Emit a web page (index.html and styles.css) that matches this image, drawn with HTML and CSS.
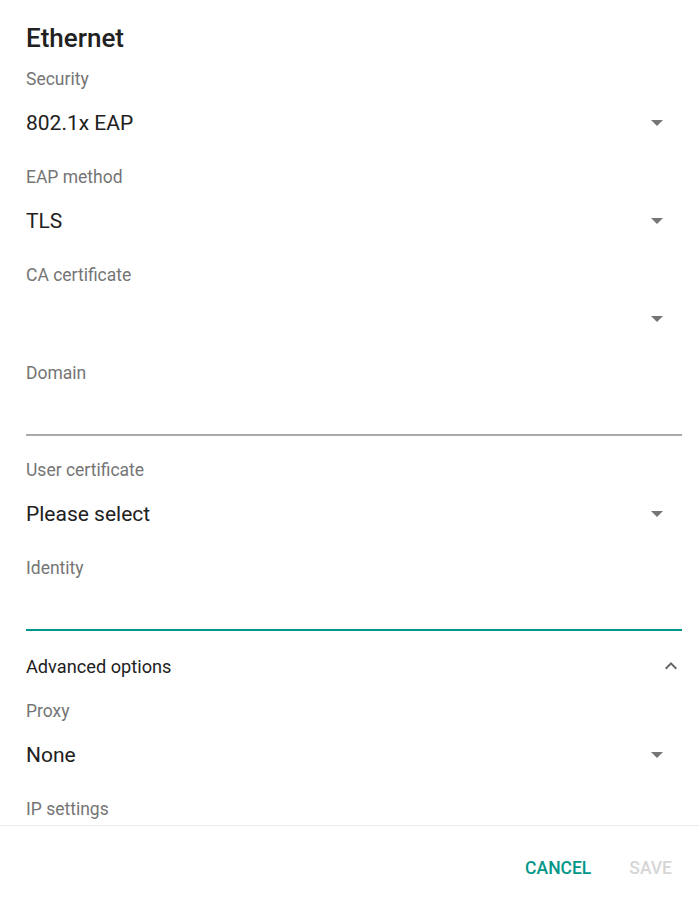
FILE: index.html
```html
<!DOCTYPE html>
<html>
<head>
<meta charset="utf-8">
<link rel="stylesheet" href="styles.css">
</head>
<body>
<div class="dialog">
  <div class="content">
    <h1 class="title">Ethernet</h1>

    <div class="field">
      <div class="label">Security</div>
      <div class="spinner"><span class="value">802.1x EAP</span><svg class="drop" width="12" height="6" viewBox="0 0 12 6"><polygon points="0,0 12,0 6,6"/></svg></div>
    </div>

    <div class="field">
      <div class="label">EAP method</div>
      <div class="spinner"><span class="value">TLS</span><svg class="drop" width="12" height="6" viewBox="0 0 12 6"><polygon points="0,0 12,0 6,6"/></svg></div>
    </div>

    <div class="field">
      <div class="label">CA certificate</div>
      <div class="spinner"><span class="value"></span><svg class="drop" width="12" height="6" viewBox="0 0 12 6"><polygon points="0,0 12,0 6,6"/></svg></div>
    </div>

    <div class="edit">
      <div class="label">Domain</div>
      <div class="input"></div>
    </div>

    <div class="field">
      <div class="label">User certificate</div>
      <div class="spinner"><span class="value">Please select</span><svg class="drop" width="12" height="6" viewBox="0 0 12 6"><polygon points="0,0 12,0 6,6"/></svg></div>
    </div>

    <div class="edit">
      <div class="label">Identity</div>
      <div class="input focused"></div>
    </div>

    <div class="advanced">
      <span class="adv-text">Advanced options</span>
      <svg class="chev" width="24" height="24" viewBox="0 0 24 24"><path d="M12 8l-6 6 1.41 1.41L12 10.83l4.59 4.58L18 14z"/></svg>
    </div>

    <div class="field">
      <div class="label">Proxy</div>
      <div class="spinner"><span class="value">None</span><svg class="drop" width="12" height="6" viewBox="0 0 12 6"><polygon points="0,0 12,0 6,6"/></svg></div>
    </div>

    <div class="field">
      <div class="label">IP settings</div>
    </div>
  </div>
  <div class="buttons">
    <button class="btn primary">CANCEL</button>
    <button class="btn disabled">SAVE</button>
  </div>
</div>
</body>
</html>
```

FILE: styles.css
```css
* { box-sizing: border-box; }
html, body {
  margin: 0;
  padding: 0;
  background: #ffffff;
}
body {
  font-family: Roboto, "Noto Sans", sans-serif;
  color: #212121;
  width: 699px;
  height: 899px;
  overflow: hidden;
}
.dialog {
  display: flex;
  flex-direction: column;
  height: 899px;
}
.content {
  height: 825px;
  overflow: hidden;
  padding: 22px 17px 0 26px;
}
.title {
  margin: 0 0 13px 0;
  font-size: 26px;
  font-weight: 500;
  line-height: 32px;
  color: #212121;
}
.label {
  height: 24px;
  line-height: 24px;
  font-size: 17.5px;
  color: #757575;
}
.field {
  height: 98px;
}
.spinner {
  display: flex;
  align-items: center;
  justify-content: space-between;
  margin-top: 8px;
  height: 48px;
}
.value {
  font-size: 21px;
  line-height: 48px;
  color: #212121;
}
.drop {
  fill: #757575;
  margin-right: 19px;
  margin-top: -1px;
}
.edit {
  height: 97px;
}
.input {
  margin-top: 49px;
  height: 2px;
  background: #aaaaaa;
}
.input.focused {
  background: #009688;
}
.advanced {
  display: flex;
  align-items: center;
  justify-content: space-between;
  margin-top: -11px;
  height: 48px;
  margin-bottom: 9px;
}
.adv-text {
  font-size: 18.2px;
  color: #212121;
}
.chev {
  fill: #666666;
  margin-right: -1px;
}
.buttons {
  border-top: 1px solid #ebebeb;
  display: flex;
  justify-content: flex-end;
  align-items: center;
  gap: 18px;
  height: 74px;
  padding: 10px 17px 0 0;
}
.btn {
  font-family: Roboto, "Noto Sans", sans-serif;
  font-size: 17.5px;
  font-weight: 500;
  background: none;
  border: none;
  padding: 8px 10px;
  cursor: pointer;
}
.btn.primary { color: #009688; }
.btn.disabled { color: #d6d6d6; }
```
